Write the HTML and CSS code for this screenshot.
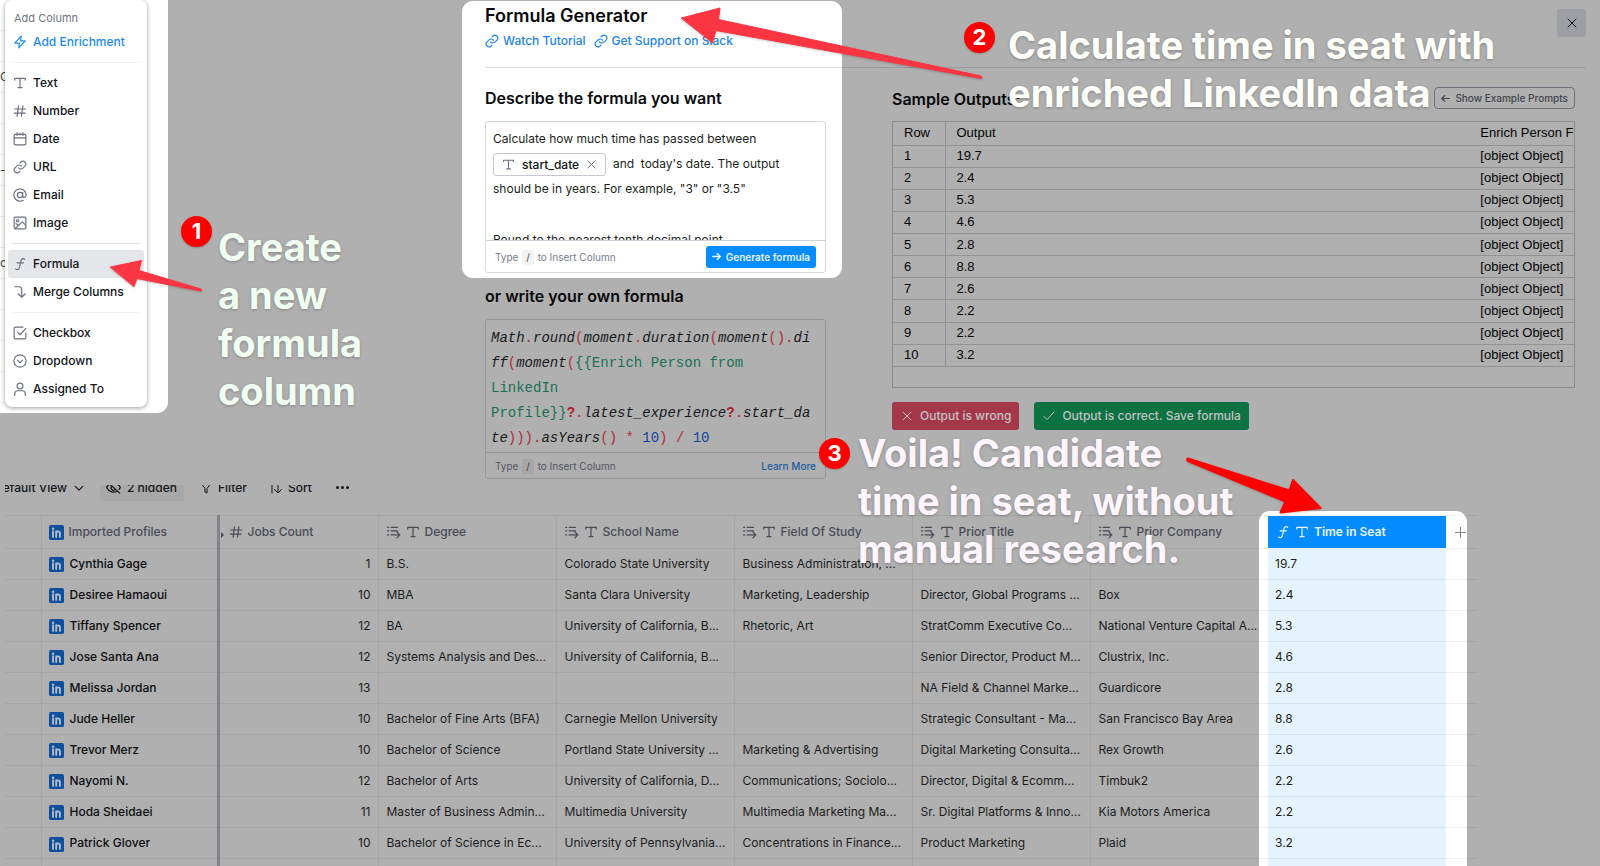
FILE: index.html
```html
<!DOCTYPE html>
<html lang="en">
<head>
<meta charset="utf-8">
<title>Formula Generator</title>
<link rel="stylesheet" href="styles.css">
</head>
<body>
<svg class="defs" aria-hidden="true">
  <symbol id="bolt" viewBox="0 0 24 24"><path d="M14 2 3 14h8l-1 8 11-12h-8z"/></symbol>
  <symbol id="type" viewBox="0 0 24 24"><path d="M3 7V4h18v3M12 4v16M8.500 20h7"/></symbol>
  <symbol id="hash" viewBox="0 0 24 24"><path d="M3 8.500h19M2 15.500h19M9.500 3 7 21M17 3l-2.500 18"/></symbol>
  <symbol id="date" viewBox="0 0 24 24"><rect x="2" y="4" width="20" height="18" rx="2"/><path d="M2 10h20M7 1v5M17 1v5M12 2v3"/></symbol>
  <symbol id="link" viewBox="0 0 24 24"><path d="M9.500 13.500a5 5 0 0 0 7.500.500l4-4a5 5 0 0 0-7-7l-2 2"/><path d="M14.500 10.500a5 5 0 0 0-7.500-.500l-4 4a5 5 0 0 0 7 7l2-2"/></symbol>
  <symbol id="at" viewBox="0 0 24 24"><circle cx="12" cy="12" r="4.500"/><path d="M16.500 7.500V13c0 4.500 6 4 6-1A10.500 10.500 0 1 0 17.500 21"/></symbol>
  <symbol id="image" viewBox="0 0 24 24"><rect x="2" y="2" width="20" height="20" rx="2"/><circle cx="8" cy="8" r="2"/><path d="m4 21 12-11 6 6M9 16l-4-3"/></symbol>
  <symbol id="fn" viewBox="0 0 24 24"><path d="M20 4c-4-3-6 0-7 5l-1.500 7c-1 5-3 7-7 4.500M7 10h11"/></symbol>
  <symbol id="merge" viewBox="0 0 24 24"><path d="M3 3h7a5 5 0 0 1 5 5v13M9 15l6 6 6-6"/></symbol>
  <symbol id="check" viewBox="0 0 24 24"><path d="M22 12v8a2 2 0 0 1-2 2H4a2 2 0 0 1-2-2V4a2 2 0 0 1 2-2h13M8 11l4 4L22 4"/></symbol>
  <symbol id="drop" viewBox="0 0 24 24"><circle cx="12" cy="12" r="10.500"/><path d="m7.500 10.500 4.500 4.500 4.500-4.500"/></symbol>
  <symbol id="user" viewBox="0 0 24 24"><circle cx="12" cy="7" r="5"/><path d="M3 23v-3a5 5 0 0 1 5-5h8a5 5 0 0 1 5 5v3"/></symbol>
  <symbol id="x" viewBox="0 0 24 24"><path d="m4 4 16 16M20 4 4 20"/></symbol>
  <symbol id="tick" viewBox="0 0 24 24"><path d="m2 13 6 6L22 4"/></symbol>
  <symbol id="right" viewBox="0 0 24 24"><path d="M2 12h20M14 4l8 8-8 8"/></symbol>
  <symbol id="left" viewBox="0 0 24 24"><path d="M22 12H2M10 4l-8 8 8 8"/></symbol>
  <symbol id="plus" viewBox="0 0 24 24"><path d="M12 1v22M1 12h22"/></symbol>
  <symbol id="chev" viewBox="0 0 24 24"><path d="m3 8 9 9 9-9"/></symbol>
  <symbol id="eye" viewBox="0 0 24 24"><path d="M2 3l20 18M5 7c-2 1.500-3 3-4 5 4 8 12 9 17 6M9 5c6-1 11 2 14 7l-2 3M9 10a4 4 0 0 0 5 6"/></symbol>
  <symbol id="funnel" viewBox="0 0 24 24"><path d="M4 2h16v3l-6 8v9l-4-2v-7L4 5z"/></symbol>
  <symbol id="sort" viewBox="0 0 24 24"><path d="M4 22V4M16 2v19M9 15l7 7 7-7"/></symbol>
  <symbol id="flow" viewBox="0 0 24 24"><path d="M7 4h11M7 10h11M7 17h15M17 12l5 5-5 5M1 4h2M1 10h2M1 17h2"/></symbol>
  <symbol id="in" viewBox="0 0 24 24"><rect width="24" height="24" rx="3" fill="#0f4f9b" stroke="none"/><path d="M6.500 10v9M11.500 10v9M11.500 19v-5c0-5 6-5 6 0v5" stroke="#b3bccb" stroke-width="3"/><circle cx="6.500" cy="6" r="2" fill="#b3bccb" stroke="none"/></symbol>
</svg>

<div class="top">
  <aside class="menu-spot">
    <div class="sliver" aria-hidden="true"><span></span><span></span><span>C</span><span></span><span></span><span>-</span><span></span><span></span><span>ca</span><span></span><span></span><span></span><span></span></div>
    <nav class="menu">
      <p class="menu-title">Add Column</p>
      <button class="item enrich"><svg><use href="#bolt"/></svg>Add Enrichment</button>
      <hr>
      <button class="item"><svg><use href="#type"/></svg>Text</button>
      <button class="item"><svg><use href="#hash"/></svg>Number</button>
      <button class="item"><svg><use href="#date"/></svg>Date</button>
      <button class="item"><svg><use href="#link"/></svg>URL</button>
      <button class="item"><svg><use href="#at"/></svg>Email</button>
      <button class="item"><svg><use href="#image"/></svg>Image</button>
      <hr class="strong">
      <button class="item active"><svg><use href="#fn"/></svg>Formula</button>
      <button class="item"><svg><use href="#merge"/></svg>Merge Columns</button>
      <hr>
      <button class="item"><svg><use href="#check"/></svg>Checkbox</button>
      <button class="item"><svg><use href="#drop"/></svg>Dropdown</button>
      <button class="item"><svg><use href="#user"/></svg>Assigned To</button>
    </nav>
  </aside>

  <main class="generator">
    <section class="card">
      <header class="card-head">
        <h1>Formula Generator</h1>
        <div class="links">
          <a href="#"><svg><use href="#link"/></svg>Watch Tutorial</a>
          <a href="#"><svg><use href="#link"/></svg>Get Support on Slack</a>
        </div>
      </header>
      <div class="card-body">
        <h2>Describe the formula you want</h2>
        <div class="box">
          <div class="prompt" role="textbox" aria-label="Describe the formula you want">
            <p>Calculate how much time has passed between <span class="chip"><svg><use href="#type"/></svg>start_date<svg class="chip-x"><use href="#x"/></svg></span>&nbsp; and &nbsp;today's date. The output should be in years. For example, "3" or "3.5"</p>
            <p>Round to the nearest tenth decimal point.</p>
          </div>
          <div class="foot"><span>Type <kbd>/</kbd> to Insert Column</span><button class="generate"><svg><use href="#right"/></svg>Generate formula</button></div>
        </div>
      </div>
    </section>
    <section class="own">
      <h2>or write your own formula</h2>
      <div class="box dim">
<pre class="code"><i>Math</i><b>.</b><i>round</i><b>(</b><i>moment</i><b>.</b><i>duration</i><b>(</b><i>moment</i><b>().</b><i>di</i>
<i>ff</i><b>(</b><i>moment</i><b>(</b><span class="ref">{{Enrich Person from
LinkedIn
Profile}}</span><strong>?</strong><b>.</b><i>latest_experience</i><strong>?</strong><b>.</b><i>start_da</i>
<i>te</i><b>))).</b><i>asYears</i><b>()</b> <b>*</b> <span class="num">10</span><b>)</b> <b>/</b> <span class="num">10</span></pre>
        <div class="foot"><span>Type <kbd>/</kbd> to Insert Column</span><a href="#">Learn More</a></div>
      </div>
    </section>
  </main>

  <section class="outputs">
    <header class="out-head"><button class="close" aria-label="Close"><svg><use href="#x"/></svg></button></header>
    <div class="out-body">
      <div class="out-title"><h2>Sample Outputs:</h2><button class="examples"><svg><use href="#left"/></svg>Show Example Prompts</button></div>
      <div class="sample-wrap">
        <table class="sample">
          <colgroup><col class="c-row"><col class="c-out"><col></colgroup>
          <thead><tr><th>Row</th><th>Output</th><th>Enrich Person From LinkedIn</th></tr></thead>
          <tbody>
            <tr><td>1</td><td>19.7</td><td>[object Object]</td></tr>
            <tr><td>2</td><td>2.4</td><td>[object Object]</td></tr>
            <tr><td>3</td><td>5.3</td><td>[object Object]</td></tr>
            <tr><td>4</td><td>4.6</td><td>[object Object]</td></tr>
            <tr><td>5</td><td>2.8</td><td>[object Object]</td></tr>
            <tr><td>6</td><td>8.8</td><td>[object Object]</td></tr>
            <tr><td>7</td><td>2.6</td><td>[object Object]</td></tr>
            <tr><td>8</td><td>2.2</td><td>[object Object]</td></tr>
            <tr><td>9</td><td>2.2</td><td>[object Object]</td></tr>
            <tr><td>10</td><td>3.2</td><td>[object Object]</td></tr>
          </tbody>
        </table>
      </div>
      <div class="verdict">
        <button class="wrong"><svg><use href="#x"/></svg>Output is wrong</button>
        <button class="right"><svg><use href="#tick"/></svg>Output is correct. Save formula</button>
      </div>
    </div>
  </section>
</div>

<div class="toolbar">
  <button class="view">Default View<svg><use href="#chev"/></svg></button>
  <button class="hidden"><svg><use href="#eye"/></svg>2 hidden</button>
  <button class="filter"><svg><use href="#funnel"/></svg>Filter</button>
  <button class="sort"><svg><use href="#sort"/></svg>Sort</button>
  <button class="more" aria-label="More"><span></span><span></span><span></span></button>
</div>

<div class="grid-wrap">
<table class="grid">
  <colgroup><col class="g-idx"><col class="g-name"><col class="g-jobs"><col class="g-std"><col class="g-std"><col class="g-std"><col class="g-std"><col class="g-std"><col class="g-std"><col></colgroup>
  <thead><tr>
    <th></th>
    <th class="name"><span class="h"><svg class="in"><use href="#in"/></svg>Imported Profiles</span></th>
    <th class="jobs"><span class="h"><svg><use href="#hash"/></svg>Jobs Count</span></th>
    <th><span class="h"><svg><use href="#flow"/></svg><svg><use href="#type"/></svg>Degree</span></th>
    <th><span class="h"><svg><use href="#flow"/></svg><svg><use href="#type"/></svg>School Name</span></th>
    <th><span class="h"><svg><use href="#flow"/></svg><svg><use href="#type"/></svg>Field Of Study</span></th>
    <th><span class="h"><svg><use href="#flow"/></svg><svg><use href="#type"/></svg>Prior Title</span></th>
    <th><span class="h"><svg><use href="#flow"/></svg><svg><use href="#type"/></svg>Prior Company</span></th>
    <th class="seat"><span class="h"><svg><use href="#fn"/></svg><svg><use href="#type"/></svg>Time in Seat</span></th>
    <th class="add"><button aria-label="Add column"><svg><use href="#plus"/></svg></button></th>
  </tr></thead>
  <tbody>
    <tr><td></td><td class="name"><svg class="in"><use href="#in"/></svg>Cynthia Gage</td><td class="n">1</td><td>B.S.</td><td>Colorado State University</td><td>Business Administration, ...</td><td></td><td></td><td class="s">19.7</td><td></td></tr>
    <tr><td></td><td class="name"><svg class="in"><use href="#in"/></svg>Desiree Hamaoui</td><td class="n">10</td><td>MBA</td><td>Santa Clara University</td><td>Marketing, Leadership</td><td>Director, Global Programs ...</td><td>Box</td><td class="s">2.4</td><td></td></tr>
    <tr><td></td><td class="name"><svg class="in"><use href="#in"/></svg>Tiffany Spencer</td><td class="n">12</td><td>BA</td><td>University of California, B...</td><td>Rhetoric, Art</td><td>StratComm Executive Co...</td><td>National Venture Capital A...</td><td class="s">5.3</td><td></td></tr>
    <tr><td></td><td class="name"><svg class="in"><use href="#in"/></svg>Jose Santa Ana</td><td class="n">12</td><td>Systems Analysis and Des...</td><td>University of California, B...</td><td></td><td>Senior Director, Product M...</td><td>Clustrix, Inc.</td><td class="s">4.6</td><td></td></tr>
    <tr><td></td><td class="name"><svg class="in"><use href="#in"/></svg>Melissa Jordan</td><td class="n">13</td><td></td><td></td><td></td><td>NA Field &amp; Channel Marke...</td><td>Guardicore</td><td class="s">2.8</td><td></td></tr>
    <tr><td></td><td class="name"><svg class="in"><use href="#in"/></svg>Jude Heller</td><td class="n">10</td><td>Bachelor of Fine Arts (BFA)</td><td>Carnegie Mellon University</td><td></td><td>Strategic Consultant - Ma...</td><td>San Francisco Bay Area</td><td class="s">8.8</td><td></td></tr>
    <tr><td></td><td class="name"><svg class="in"><use href="#in"/></svg>Trevor Merz</td><td class="n">10</td><td>Bachelor of Science</td><td>Portland State University ...</td><td>Marketing &amp; Advertising</td><td>Digital Marketing Consulta...</td><td>Rex Growth</td><td class="s">2.6</td><td></td></tr>
    <tr><td></td><td class="name"><svg class="in"><use href="#in"/></svg>Nayomi N.</td><td class="n">12</td><td>Bachelor of Arts</td><td>University of California, D...</td><td>Communications; Sociolo...</td><td>Director, Digital &amp; Ecomm...</td><td>Timbuk2</td><td class="s">2.2</td><td></td></tr>
    <tr><td></td><td class="name"><svg class="in"><use href="#in"/></svg>Hoda Sheidaei</td><td class="n">11</td><td>Master of Business Admin...</td><td>Multimedia University</td><td>Multimedia Marketing Ma...</td><td>Sr. Digital Platforms &amp; Inno...</td><td>Kia Motors America</td><td class="s">2.2</td><td></td></tr>
    <tr><td></td><td class="name"><svg class="in"><use href="#in"/></svg>Patrick Glover</td><td class="n">10</td><td>Bachelor of Science in Ec...</td><td>University of Pennsylvania...</td><td>Concentrations in Finance...</td><td>Product Marketing</td><td>Plaid</td><td class="s">3.2</td><td></td></tr>
    <tr><td></td><td class="name"></td><td></td><td></td><td></td><td></td><td></td><td></td><td class="s"></td><td></td></tr>
  </tbody>
</table>
</div>

<svg class="arrows" viewBox="0 0 1600 866" aria-hidden="true">
  <g fill="#fb3541" stroke="#fb3541" stroke-width="1" stroke-linejoin="round">
    <path d="M110.500 267 141.500 260.500 139 270.500 201 289Q202.500 290.500 200.500 291L137 278.500 134 286.500Z"/>
    <path d="M681.500 18 720 8 718.500 19.500 981 76Q983 78 981 78.500L716 30.500 712.500 42.500Z"/>
  </g>
  <path fill="#f00" stroke="#f00" stroke-linejoin="round" d="M1188 458.500 1289.500 490.500 1293 480 1320.500 508 1280.500 512.500 1285.500 501.500 1188 461Q1186 459.500 1188 458.500Z"/>
</svg>
<div class="badge b1">1</div>
<p class="note n1">Create<br>a new<br>formula<br>column</p>
<div class="badge b2">2</div>
<p class="note n2">Calculate time in seat with<br>enriched LinkedIn data</p>
<div class="badge b3">3</div>
<p class="note n3">Voila! Candidate<br>time in seat, without<br>manual research.</p>
</body>
</html>
```
FILE: styles.css
```css
* { box-sizing: border-box; margin: 0; padding: 0; }
body {
  position: relative;
  height: 100vh;
  overflow: hidden;
  display: flex;
  flex-direction: column;
  background: #b0b0b0;
  color: #08090b;
  font: 12px/20px Inter, "Liberation Sans", sans-serif;
}
button { font: inherit; color: inherit; border: 0; background: none; display: flex; align-items: center; white-space: nowrap; }
a { text-decoration: none; }
svg { width: 14px; height: 14px; flex: none; fill: none; stroke: currentColor; stroke-width: 2; stroke-linecap: round; stroke-linejoin: round; }
.defs { position: absolute; width: 0; height: 0; }

.top {
  display: grid;
  grid-template-columns: minmax(0, 462fr) minmax(0, 380fr) minmax(0, 758fr);
  height: 485px;
  flex: none;
}

/* add-column menu */
.menu-spot { display: flex; align-items: flex-start; width: 168px; height: 413px; background: #fff; border-radius: 0 0 11px 0; overflow: hidden; }
.sliver { width: 5px; overflow: hidden; display: flex; flex-direction: column; }
.sliver span { height: 31px; flex: none; border-bottom: 1px solid #eee; display: flex; align-items: center; color: #444; }
.menu { width: 142px; height: 407px; padding: 8px 3px 0; background: #fff; border-radius: 7px; box-shadow: 0 1px 4px rgba(0, 0, 0, .4); }
.menu-title { padding-left: 6px; font-size: 11px; line-height: 20px; color: #73767f; }
.item { width: 100%; height: 28px; padding-left: 5px; gap: 6px; font-weight: 500; color: #111318; border-radius: 3px; }
.item svg { color: #6b7080; }
.item.enrich, .item.enrich svg { color: #1c8cf5; }
.item.active { background: #e5e6ea; }
.menu hr { border: 0; height: 1px; margin: 6px 4px; background: #eeeff2; }
.menu hr.strong { background: #dfe1ea; }

/* generator */
.card { height: 277px; margin-top: 1px; padding-left: 23px; background: #fff; border-radius: 11px; }
.card-head { height: 67px; border-bottom: 1px solid #dddfe4; padding-top: 3px; }
h1 { font-size: 18px; line-height: 24px; font-weight: 600; }
.links { display: flex; gap: 8px; padding-top: 3px; }
.links a { display: flex; align-items: center; gap: 4px; color: #1c84e6; font-weight: 500; }
.card-body { padding-right: 16px; }
h2 { font-size: 16px; line-height: 24px; font-weight: 600; white-space: nowrap; }
.card-body h2 { padding: 18px 0 11px; }
.box { border: 1px solid #d5d8de; border-radius: 3px; }
.prompt { height: 118px; padding: 4px 7px 0; line-height: 25px; overflow: hidden; color: #1d1f24; }
.prompt p + p { margin-top: 26px; }
.chip { display: inline-flex; align-items: center; gap: 7px; height: 23px; padding: 0 8px; border: 1px solid #c6c9d3; border-radius: 3px; vertical-align: middle; font-weight: 500; line-height: 20px; color: #111318; }
.chip svg { width: 13px; height: 13px; color: #6b7080; }
.chip .chip-x { width: 11px; height: 11px; }
.foot { display: flex; align-items: center; justify-content: space-between; height: 32px; padding: 0 9px; border-top: 1px solid #cfd2da; font-size: 10px; color: #787c88; }
kbd { display: inline-block; padding: 0 4px; margin: 0 1px; font: inherit; line-height: 15px; background: #f2f2f2; border-radius: 2px; color: #555; }
.generate { height: 22px; padding: 0 6px; gap: 5px; background: #058cff; color: #e9f5ff; border-radius: 3px; font-weight: 600; }
.generate svg { width: 9px; height: 9px; stroke-width: 4; }
.own { padding: 6px 16px 0 23px; }
.own h2 { padding-bottom: 11px; box-sizing: content-box; }
.dim { border-color: #949599; }
.code { height: 132px; padding: 6px 5px 0; font: 14px/25px "Liberation Mono", monospace; color: #17181b; overflow: hidden; }
.code b { font-weight: 400; color: #ab2f3d; }
.code strong { color: #b01b2d; }
.code .ref { color: #187150; }
.code .num { color: #12469c; }
.dim .foot { height: 26px; border-color: #949599; color: #53555e; }
.dim kbd { background: #a6a6a7; color: #3b3c40; }
.dim .foot a { color: #1d5d9f; font-weight: 500; }

/* outputs */
.out-head { height: 68px; margin-right: 14px; border-bottom: 1px solid #9a9b9f; display: flex; justify-content: flex-end; padding-top: 9px; }
.close { width: 29px; height: 28px; justify-content: center; background: #9e9fa4; border-radius: 3px; color: #111; }
.close svg { width: 12px; height: 12px; }
.out-body { padding: 19px 25px 0 50px; }
.out-title { display: flex; justify-content: space-between; height: 34px; align-items: flex-start; }
.examples { height: 22px; padding: 0 6px; gap: 5px; border: 1px solid #6d6f79; border-radius: 4px; font-size: 10px; font-weight: 500; color: #42444f; }
.examples svg { width: 9px; height: 9px; stroke-width: 3; }
.sample-wrap { height: 267px; border: 1px solid #8b8b8c; overflow: hidden; }
.sample { width: 100%; height: 245px; table-layout: fixed; border-collapse: collapse; font: 13px/18px "Liberation Sans", Arial, sans-serif; color: #050505; }
.sample th { height: 23px; font-weight: 400; text-align: left; }
.sample td { height: 22px; }
.sample th, .sample td { padding: 0 0 0 11px; border-bottom: 1px solid #929293; white-space: nowrap; }
.sample tr > :first-child { border-right: 1px solid #929293; }
.c-row { width: 52px; }
.c-out { width: 77%; }
.verdict { display: flex; gap: 15px; padding-top: 14px; }
.verdict button { height: 28px; gap: 7px; padding: 0 8px 0 9px; border-radius: 3px; font-weight: 500; color: #c4c4c4; }
.verdict svg { width: 12px; height: 12px; }
.wrong { background: #a5374b; }
.right { background: #0c7241; }

/* toolbar */
.toolbar { display: flex; align-items: flex-end; height: 16px; flex: none; overflow: hidden; font-weight: 500; }
.toolbar button { height: 27px; gap: 6px; color: #15161a; }
.toolbar svg { width: 12px; height: 12px; }
.toolbar .view { width: 79px; margin-left: 5px; overflow: hidden; justify-content: flex-end; gap: 7px; }
.toolbar .view svg { width: 10px; height: 10px; stroke-width: 3; }
.toolbar .hidden { width: 84px; margin-left: 16px; padding: 0 6px; background: #a8a8a9; border-radius: 3px; }
.toolbar .hidden svg { width: 15px; height: 15px; }
.filter { margin-left: 16px; width: 54px; }
.sort { margin-left: 16px; width: 46px; }
.toolbar .more { gap: 2px; margin-left: 20px; }
.more span { width: 3px; height: 3px; border-radius: 50%; background: currentColor; }

/* records */
.grid-wrap { flex: 1; min-height: 0; margin-top: 9px; padding: 5px 0 0 5px; overflow: hidden; isolation: isolate; }
.grid { width: 1472px; min-width: 92%; height: 375px; table-layout: fixed; border-collapse: collapse; color: #1b1c20; }
.g-idx { width: 36px; }
.g-name { width: 177px; }
.g-jobs { width: 160px; }
.g-std { width: 178px; }
.grid th { height: 33px; font-weight: 500; text-align: left; color: #484a56; }
.grid td { height: 31px; }
.grid td, .grid th { padding: 0 0 0 8px; border-top: 1px solid rgba(0, 0, 0, .06); border-right: 1px solid rgba(0, 0, 0, .06); white-space: nowrap; }
.grid tr > :nth-child(8), .grid tr > :nth-child(9), .grid tr > :last-child { border-right: 0; }
.grid td.name, .grid th.name { padding-left: 7px; border-right: 3px solid #80838b; color: #0c0d0f; font-weight: 500; }
.grid th.name { color: #484a56; }
.grid .in { width: 15px; height: 15px; vertical-align: middle; margin-right: 6px; }
.h { display: flex; align-items: center; gap: 5px; }
.h svg { width: 14px; height: 14px; }
.grid .h .in { width: 15px; height: 15px; margin-right: 0; }
.grid th.jobs { position: relative; padding-left: 9px; }
.grid th.jobs::before { content: ""; position: absolute; left: 1px; top: 16px; border: 3px solid transparent; border-left-color: #484a56; border-right: 0; }
.grid td.n { text-align: right; padding-right: 7px; }
.grid td.s { padding-left: 7px; background: #e5f3fe; }
.grid th.seat { position: relative; background: #058cff; color: #e8f5ff; font-weight: 600; }
.grid th.seat::before { content: ""; position: absolute; z-index: -1; left: -9px; right: -21px; top: -5px; height: 100vh; background: #fff; border-radius: 11px 11px 0 0; }
.grid th.add { padding-left: 9px; }
.add button { color: #74777f; }
.add svg { width: 11px; height: 11px; }

/* annotations */
.arrows { position: absolute; left: 0; top: 0; width: 1600px; height: 866px; filter: drop-shadow(0 1px 1px rgba(0, 0, 0, .2)); pointer-events: none; }
.badge { position: absolute; width: 31px; height: 31px; border-radius: 50%; background: #f00; color: #fff; font-size: 22px; line-height: 31px; font-weight: 700; text-align: center; box-shadow: 0 1px 2px rgba(0, 0, 0, .2); }
.note { position: absolute; font-size: 38px; line-height: 48px; font-weight: 700; white-space: nowrap; text-shadow: 0 1px 3px rgba(0, 0, 0, .25); }
.b1 { left: 181px; top: 216px; }
.b2 { left: 964px; top: 22px; }
.b3 { left: 819px; top: 438px; }
.n1 { left: 218px; top: 223px; color: #f0fff1; }
.n2 { left: 1008px; top: 21px; color: #fffffa; }
.n3 { left: 858px; top: 429px; color: #fff5ff; }
```
